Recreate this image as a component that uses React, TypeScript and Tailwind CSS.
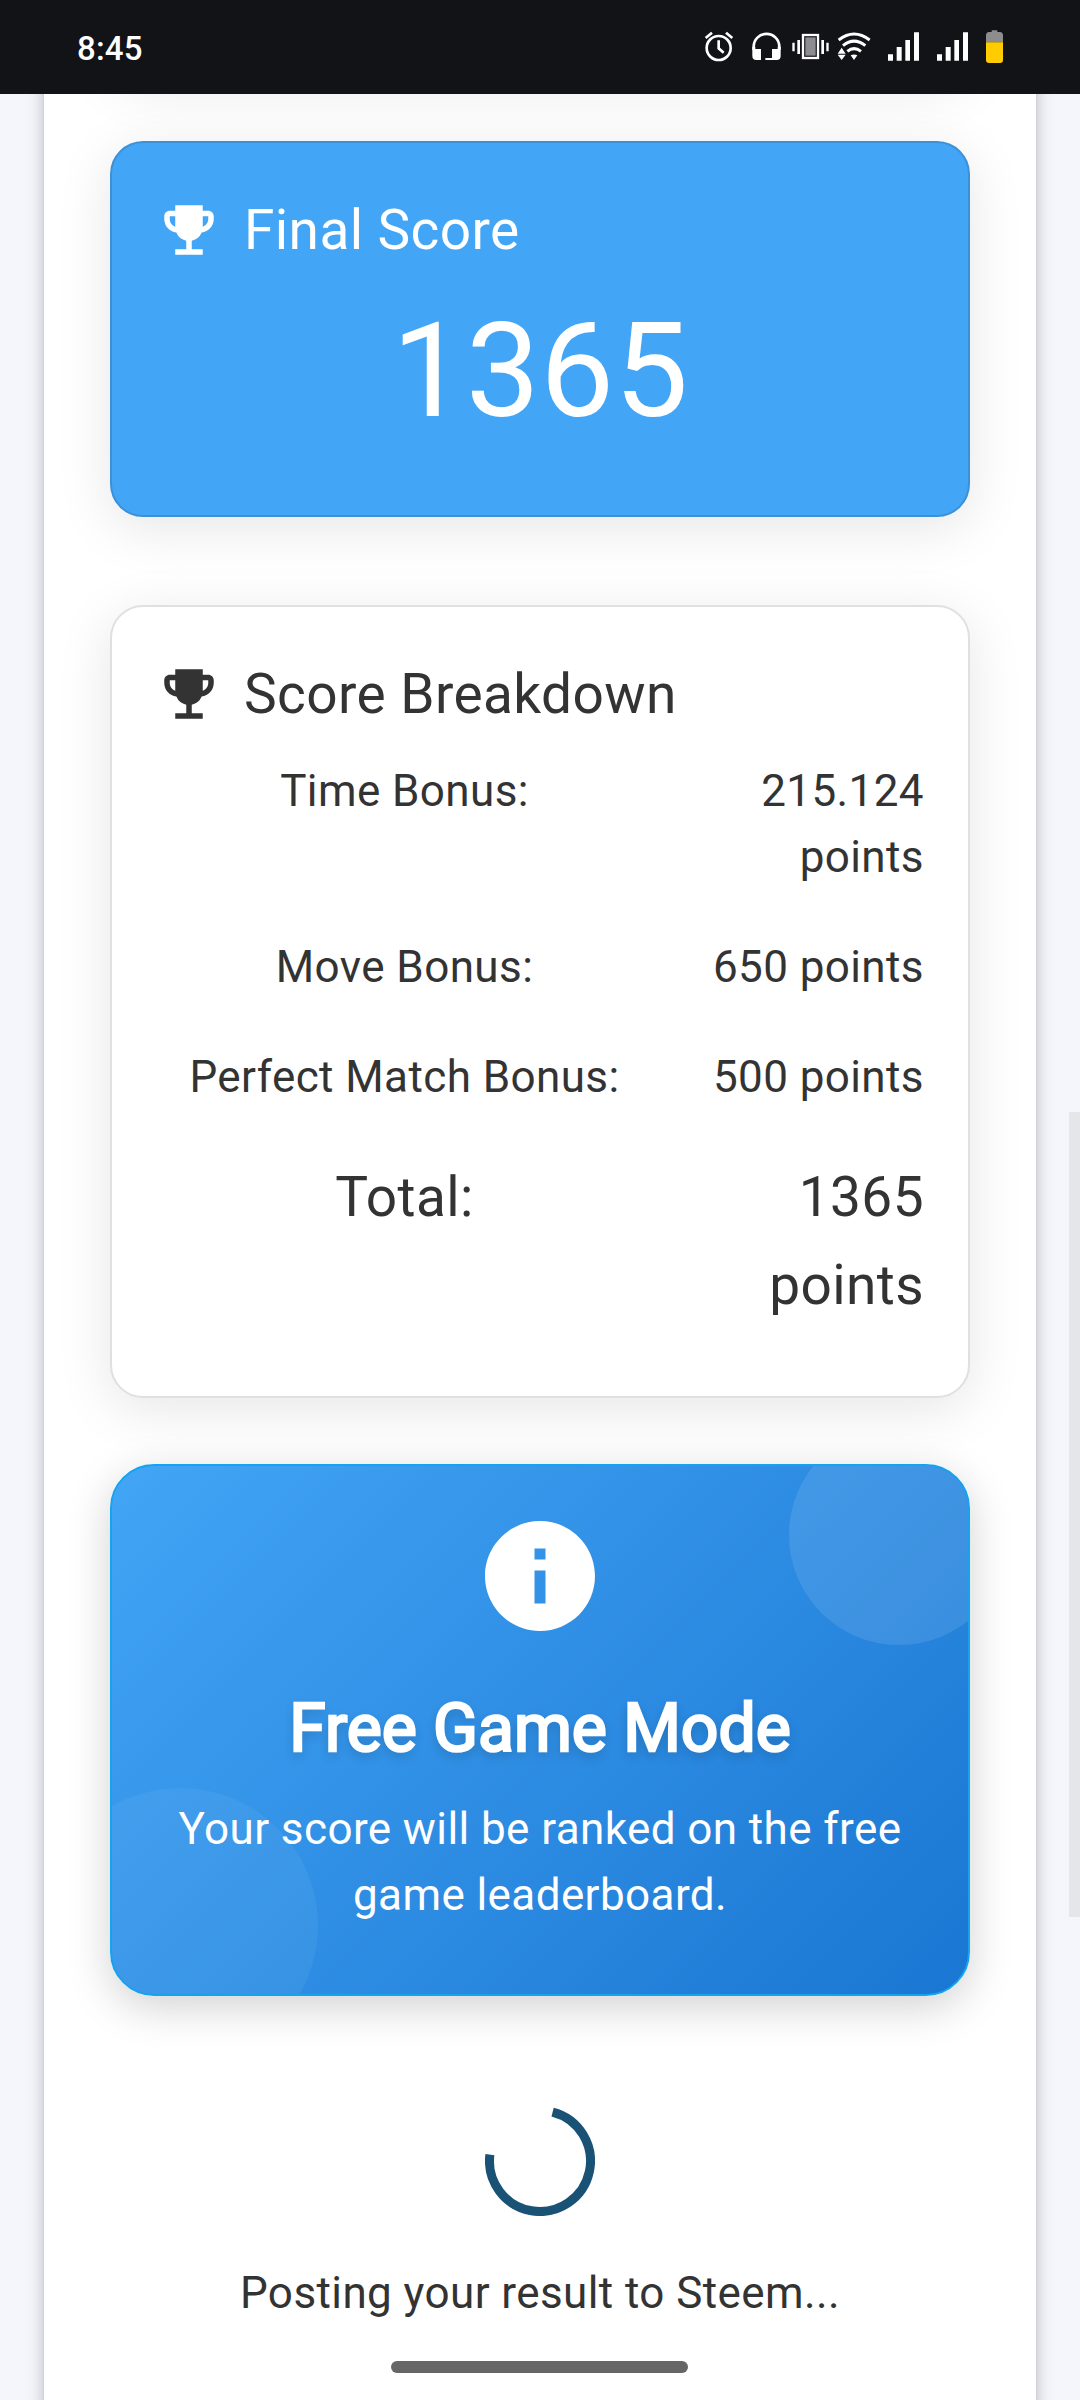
import type { ReactNode } from 'react';
import clsx from 'clsx';
import { MdEmojiEvents, MdInfo } from 'react-icons/md';

const bonuses = [
  { label: 'Time Bonus:', value: '215.124 points' },
  { label: 'Move Bonus:', value: '650 points' },
  { label: 'Perfect Match Bonus:', value: '500 points' },
];

export default function App() {
  return (
    <div className="flex h-[2400px] w-[1080px] flex-col overflow-hidden bg-[#f4f6fb] font-[Roboto,sans-serif] text-[#333333]">
      <StatusBar />

      <main className="relative flex-1 overflow-hidden px-11">
        <div className="-mt-11 flex h-[2400px] flex-col bg-white px-[66px] shadow-[0_8px_8px_-5px_rgba(0,0,0,0.2),0_8px_11px_0_rgba(0,0,0,0.14),0_3px_22px_0_rgba(0,0,0,0.12)]">
          {/* bottom of the previous card, scrolled out of view */}
          <Card className="-mt-[41px] h-[66px] shrink-0 border-[#e0e0e0] bg-white" />

          <Card className="mt-[66px] h-[376px] shrink-0 border-black/12 bg-[#42a5f5] text-white">
            <CardTitle>Final Score</CardTitle>
            <p className="mt-5 text-center text-[132px] leading-[154px]">1365</p>
          </Card>

          <Card className="mt-[88px] h-[793px] shrink-0 border-[#e0e0e0] bg-white">
            <CardTitle>Score Breakdown</CardTitle>
            <dl className="mt-5 flex flex-col gap-11">
              {bonuses.map((b) => (
                <Row key={b.label} {...b} />
              ))}
              <Row label="Total:" value="1365 points" total />
            </dl>
          </Card>

          <FreeGameBanner />

          <div className="mt-[110px] flex flex-col items-center">
            <Spinner />
            <p className="mt-11 text-[44px] leading-[66px] tracking-[0.41px]">
              Posting your result to Steem...
            </p>
          </div>
        </div>

        {/* page scrollbar thumb */}
        <div className="absolute top-[1018px] right-0 h-[805px] w-[11px] bg-[#e5e6ea]" />
        {/* system gesture bar */}
        <div className="absolute bottom-[27px] left-[391px] h-3 w-[297px] rounded-full bg-[#666666]" />
      </main>
    </div>
  );
}

function Card({ className, children }: { className?: string; children?: ReactNode }) {
  return (
    <section
      className={clsx(
        'rounded-[33px] border-2 px-11 pt-[43px] shadow-[0_11px_55px_rgba(0,0,0,0.1)]',
        className,
      )}
    >
      {children}
    </section>
  );
}

function CardTitle({ children }: { children: ReactNode }) {
  return (
    <div className="flex items-center gap-[22px]">
      <MdEmojiEvents size={66} />
      <h2 className="text-[55px] leading-[88px] tracking-[0.41px]">{children}</h2>
    </div>
  );
}

function Row({ label, value, total }: { label: string; value: string; total?: boolean }) {
  return (
    <div
      className={clsx(
        'flex items-start',
        total ? '-mt-px text-[55px] leading-[88px]' : 'text-[44px] leading-[66px]',
      )}
    >
      <dt className="w-[497px] text-center tracking-[0.41px]">{label}</dt>
      <dd className="ml-auto w-[225px] text-right tracking-[0.41px]">{value}</dd>
    </div>
  );
}

function FreeGameBanner() {
  return (
    <section className="relative mt-[66px] flex h-[532px] shrink-0 flex-col items-center overflow-hidden rounded-[44px] border-2 border-[#14a3ef] bg-linear-135 from-[#42a5f5] to-[#1976d2] px-[45px] pt-11 text-center text-white shadow-[0_11px_44px_rgba(0,0,0,0.18)]">
      <div className="absolute -top-[41px] -right-[41px] size-[220px] rounded-full bg-white/10" />
      <div className="absolute -bottom-[69px] -left-[69px] size-[275px] rounded-full bg-white/5" />
      <MdInfo size={132} />
      {/* stroked regular weight keeps the letterforms tighter than real bold */}
      <h2 className="mt-[34px] text-[66px] leading-[105px] font-normal [-webkit-text-stroke:2.5px_white] [text-shadow:0_5px_11px_rgba(0,0,0,0.2)]">
        Free Game Mode
      </h2>
      <p className="mt-[15px] text-[44px] leading-[66px] tracking-[0.41px]">
        Your score will be ranked on the free game leaderboard.
      </p>
    </section>
  );
}

function Spinner() {
  return (
    <svg width="110" height="110" viewBox="-55 -55 110 110" fill="none">
      <path
        d="M12.6 -48.9A50.5 50.5 0 1 1 -50.1 -6.4"
        stroke="#1a5276"
        strokeWidth="9"
      />
    </svg>
  );
}

function StatusBar() {
  return (
    <header className="z-10 flex h-[94px] shrink-0 items-start bg-[#121317] text-white">
      <span className="mt-[29px] ml-[77px] text-[33px] leading-[40px] font-medium tracking-[0.2px]">8:45</span>
      <div className="mt-[28px] mr-[77px] ml-auto flex">
        <AlarmIcon />
        <HeadphonesIcon />
        <VibrateIcon />
        <WifiIcon />
        <SignalIcon />
        <SignalIcon />
        <BatteryIcon />
      </div>
    </header>
  );
}

function AlarmIcon() {
  return (
    <svg className="mr-[18px]" width="30" height="36" viewBox="74 84 90 108" fill="none" stroke="currentColor">
      <circle cx="118" cy="144" r="36" strokeWidth="8" />
      <path d="M118 121v24l15 13" strokeWidth="8" />
      <path d="M79 114l19-16M159 114l-19-16" strokeWidth="8" />
    </svg>
  );
}

function HeadphonesIcon() {
  return (
    <svg className="mr-[11px]" width="29" height="36" viewBox="216 84 87 108">
      <path d="M221 150v-10a38 38 0 0 1 77 0v10" fill="none" stroke="currentColor" strokeWidth="8" />
      <path
        d="M217 140h9v7h17v33h-14q-12 0-12-12zM302 140h-9v7h-17v27h-20v6h34q12 0 12-12z"
        fill="currentColor"
      />
    </svg>
  );
}

function VibrateIcon() {
  return (
    <svg className="mr-[8px]" width="37" height="36" viewBox="336 84 111 108">
      <rect x="369" y="105" width="45" height="69" fill="none" stroke="currentColor" strokeWidth="7" />
      <rect x="376" y="112" width="31" height="55" fill="#8d8d90" />
      <path
        d="M337 128h7v26h-7zM352 120h8v42h-8zM424 120h8v42h-8zM439 128h7v26h-7z"
        fill="currentColor"
      />
    </svg>
  );
}

function WifiIcon() {
  return (
    <svg className="mr-[17px]" width="34" height="36" viewBox="472 84 102 108">
      <g fill="none" stroke="currentColor" strokeWidth="9">
        <path d="M477 120Q523 84 570 120" />
        <path d="M490 137Q523 110 557 137" />
        <path d="M503 154Q523 138 544 154" />
      </g>
      <path
        d="M474 161l12-18 12 18zM474 164h24l-12 16zM513 166q10-5 20 0l-10 14z"
        fill="currentColor"
      />
    </svg>
  );
}

function SignalIcon() {
  return (
    <svg className="mr-[18px]" width="31" height="36" viewBox="624 84 93 108" fill="currentColor">
      <path d="M624 163h15v19h-15zM650 141h15v41h-15zM676 120h14v62h-14zM702 97h15v85h-15z" />
    </svg>
  );
}

function BatteryIcon() {
  return (
    <svg width="17" height="36" viewBox="918 84 51 108">
      <path d="M918 127v-21q0-9 9-10h8v-5h17v5h8q9 1 9 10v21z" fill="#8d8d90" />
      <path d="M918 127h51v53q0 9-9 9h-33q-9 0-9-9z" fill="#ffcc00" />
    </svg>
  );
}
